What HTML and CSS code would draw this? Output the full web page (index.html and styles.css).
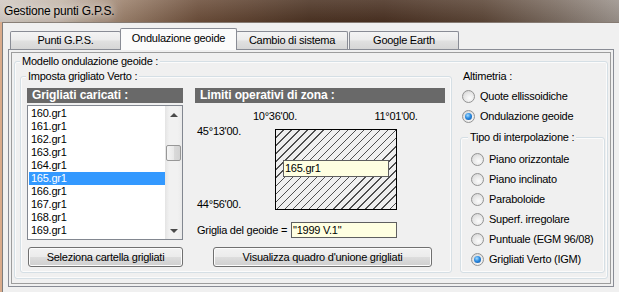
FILE: index.html
```html
<!DOCTYPE html>
<html>
  <head>
    <title>Gestione punti G.P.S.</title>
    <link rel="stylesheet" href="styles.css">
  </head>
  <body>
    <div class="titlebar">Gestione punti G.P.S.</div>
    <div class="client">
      <div class="client-body">
        <!-- tab strip -->
        <div class="tabs">
          <div class="tab tab-punti">Punti G.P.S.</div>
          <div class="tab tab-active">Ondulazione geoide</div>
          <div class="tab tab-cambio">Cambio di sistema</div>
          <div class="tab tab-google">Google Earth</div>
        </div>
        <div class="panel">
          <div class="panel-inner">
            <fieldset class="group group-modello">
              <legend>Modello ondulazione geoide :</legend>
              <div class="modello-body">
                <fieldset class="group group-imposta">
                  <legend>Imposta grigliato Verto :</legend>
                  <div class="imposta-body">
                    <div class="col-list">
                      <div class="band">Grigliati caricati :</div>
                      <div class="listbox">
                        <ul class="items">
                          <li>160.gr1</li>
                          <li>161.gr1</li>
                          <li>162.gr1</li>
                          <li>163.gr1</li>
                          <li>164.gr1</li>
                          <li class="sel">165.gr1</li>
                          <li>166.gr1</li>
                          <li>167.gr1</li>
                          <li>168.gr1</li>
                          <li>169.gr1</li>
                        </ul>
                        <div class="scrollbar">
                          <div class="sb-btn"><span class="arrow-up"></span></div>
                          <div class="sb-track"><span class="thumb"></span></div>
                          <div class="sb-btn"><span class="arrow-down"></span></div>
                        </div>
                      </div>
                      <button class="btn btn-cartella">Seleziona cartella grigliati</button>
                    </div>
                    <div class="col-zone">
                      <div class="band">Limiti operativi di zona :</div>
                      <div class="lon-row">
                        <span>10°36'00.</span>
                        <span class="lon-east">11°01'00.</span>
                      </div>
                      <div class="zone-row">
                        <div class="lat-col">
                          <span>45°13'00.</span>
                          <span>44°56'00.</span>
                        </div>
                        <div class="zone-map">
                          <div class="zone-label">165.gr1</div>
                        </div>
                      </div>
                      <div class="geoide-row">
                        <span class="geoide-text">Griglia del geoide =</span>
                        <div class="geoide-box">"1999 V.1"</div>
                      </div>
                      <button class="btn btn-quadro">Visualizza quadro d'unione grigliati</button>
                    </div>
                  </div>
                </fieldset>
                <div class="col-alti">
                  <div class="alti-title">Altimetria :</div>
                  <div class="radio-row first"><span class="radio"></span>Quote ellissoidiche</div>
                  <div class="radio-row"><span class="radio radio-on"></span>Ondulazione geoide</div>
                  <fieldset class="group group-tipo">
                    <legend>Tipo di interpolazione :</legend>
                    <div class="tipo-body">
                      <div class="radio-row"><span class="radio"></span>Piano orizzontale</div>
                      <div class="radio-row"><span class="radio"></span>Piano inclinato</div>
                      <div class="radio-row"><span class="radio"></span>Paraboloide</div>
                      <div class="radio-row"><span class="radio"></span>Superf. irregolare</div>
                      <div class="radio-row"><span class="radio"></span>Puntuale (EGM 96/08)</div>
                      <div class="radio-row"><span class="radio radio-on"></span>Grigliati Verto (IGM)</div>
                    </div>
                  </fieldset>
                </div>
              </div>
            </fieldset>
          </div>
        </div>
      </div>
    </div>
  </body>
</html>
```

FILE: styles.css
```css
* {
  box-sizing: border-box;
}

body {
  margin: 0;
  width: 619px;
  height: 292px;
  overflow: hidden;
  background-color: #f0f0f0;
  font-family: "Liberation Sans", Arial, sans-serif;
  font-size: 11px;
  line-height: 13px;
  letter-spacing: -0.25px;
  color: #000;
}

/* window frame */
.titlebar {
  height: 22px;
  padding: 4px 0 0 4px;
  font-size: 12px;
  line-height: 15px;
  letter-spacing: -0.2px;
  background:
    linear-gradient(rgba(255, 255, 255, 0.12), rgba(0, 0, 0, 0.05)),
    linear-gradient(90deg, #d2cac3 0%, #c2b4a7 10%, #9a7f6a 20%, #6c4e3a 32%, #4c3323 50%, #4a3122 62%, #5c4637 78%, #7c6d62 90%, #9b928b 100%);
  text-shadow: 0 0 6px #e8e2dc, 0 0 10px #e8e2dc, 0 0 14px #d8d0c8;
}

.client {
  height: 270px;
  border-left: 2px solid #d9ab8b;
}

.client-body {
  height: 100%;
  border-left: 1px solid #7d7d7d;
  border-top: 1px solid #857a72;
  padding-top: 5px;
}

/* tabs */
.tabs {
  display: flex;
  align-items: flex-end;
  height: 21px;
  margin-left: 7px;
}

.tab {
  height: 18px;
  border: 1px solid #898c95;
  border-bottom: none;
  border-radius: 2px 2px 0 0;
  background: linear-gradient(#f4f4f4, #ececec 45%, #e0e0e0 55%, #d6d6d6);
  text-align: center;
  line-height: 17px;
}

.tab-punti {
  width: 111px;
}

.tab-active {
  position: relative;
  z-index: 1;
  width: 117px;
  height: 22px;
  margin-left: -1px;
  margin-bottom: -1px;
  background: #fbfbfb;
  line-height: 19px;
}

.tab-cambio {
  width: 112px;
  margin-left: -1px;
}

.tab-google {
  width: 110px;
  margin-left: 1px;
}

.panel {
  width: 606px;
  height: 238px;
  margin-left: 5px;
  border: 1px solid #898c95;
  padding: 2px;
}

.panel-inner {
  height: 100%;
  border: 1px solid #9d9d9d;
  padding: 2px 2px 0;
}

/* group boxes */
.group {
  margin: 0;
  padding: 0;
  min-width: 0;
  border: 1px solid #d5dfe5;
  border-radius: 3px;
  box-shadow: inset 0 0 0 1px #fbfbfb;
}

.group legend {
  margin-left: 5px;
  padding: 0 2px;
  line-height: 13px;
  background: #f0f0f0;
}

.modello-body {
  display: flex;
  gap: 8px;
  padding: 2px 2px 5px 5px;
}

.group-imposta {
  width: 432px;
}

.imposta-body {
  display: flex;
  gap: 12px;
  padding: 5px 6px 5px 6px;
}

.band {
  height: 15px;
  padding-left: 5px;
  background-color: #696969;
  color: #fff;
  font-weight: bold;
  font-size: 12px;
  line-height: 15px;
  letter-spacing: -0.1px;
}

/* list of grids */
.col-list {
  width: 156px;
  display: flex;
  flex-direction: column;
}

.listbox {
  display: flex;
  height: 135px;
  margin-top: 2px;
  border: 1px solid #828790;
  padding: 0 0 0 1px;
  background: #fff;
}

.items {
  flex: 1;
  margin: 1px 0 0;
  padding: 0;
  list-style: none;
}

.items li {
  height: 13px;
  padding-left: 2px;
  line-height: 13px;
}

.items .sel {
  background-color: #3399ff;
  color: #fff;
}

.scrollbar {
  width: 17px;
  display: flex;
  flex-direction: column;
  background: linear-gradient(90deg, #e4e4e4, #f1f1f1 25%, #f1f1f1 75%, #eaeaea);
}

.sb-btn {
  height: 17px;
  display: flex;
  align-items: center;
  justify-content: center;
}

.sb-track {
  flex: 1;
  padding-top: 22px;
}

.thumb {
  display: block;
  width: 15px;
  height: 16px;
  margin-left: 1px;
  border: 1px solid #979797;
  border-radius: 2px;
  background: linear-gradient(90deg, #f5f5f5, #e9e9e9 50%, #dadada 51%, #d2d2d2);
}

.arrow-up {
  width: 0;
  height: 0;
  border-left: 4px solid transparent;
  border-right: 4px solid transparent;
  border-bottom: 4px solid #4a4a4a;
}

.arrow-down {
  width: 0;
  height: 0;
  border-left: 4px solid transparent;
  border-right: 4px solid transparent;
  border-top: 4px solid #4a4a4a;
}

/* buttons */
.btn {
  display: block;
  height: 20px;
  padding: 0;
  border: 1px solid #707070;
  border-radius: 3px;
  background: linear-gradient(#f2f2f2, #ebebeb 50%, #dddddd 51%, #cfcfcf);
  box-shadow: inset 0 0 0 1px #fcfcfc;
  font: inherit;
  letter-spacing: inherit;
  color: #000;
}

.btn-cartella {
  width: 155px;
  margin: 7px 0 0 1px;
}

.btn-quadro {
  width: 219px;
  margin: 9px 0 0 18px;
}

/* zone limits */
.col-zone {
  width: 250px;
}

.lon-row {
  display: flex;
  margin-top: 7px;
  padding-left: 50px;
}

.lon-row span {
  width: 60px;
  text-align: center;
}

.lon-row .lon-east {
  margin-left: 61px;
}

.zone-row {
  display: flex;
  height: 86px;
  margin-top: 2px;
}

.lat-col {
  width: 80px;
  padding-left: 2px;
  display: flex;
  flex-direction: column;
  justify-content: space-between;
}

.zone-map {
  width: 122px;
  height: 81px;
  margin-top: 4px;
  border: 1px solid #000;
  padding: 30px 0 0 7px;
  background: repeating-linear-gradient(135deg, transparent 0 4.7px, #505050 4.7px 5.7px);
}

.zone-label {
  width: 106px;
  height: 17px;
  padding-left: 1px;
  border: 1px solid #5f5f5f;
  background-color: #ffffe1;
  line-height: 15px;
}

.geoide-row {
  display: flex;
  align-items: center;
  margin-top: 11px;
  padding-left: 2px;
}

.geoide-text {
  width: 94px;
}

.geoide-box {
  width: 106px;
  height: 16px;
  padding-left: 1px;
  border: 1px solid #5f5f5f;
  background-color: #ffffe1;
  line-height: 14px;
}

/* altimetry column */
.col-alti {
  flex: 1;
  display: flex;
  flex-direction: column;
}

.alti-title {
  padding-left: 3px;
}

.radio-row {
  display: flex;
  align-items: center;
  gap: 5px;
  height: 20px;
  padding-left: 2px;
}

.radio-row.first {
  margin-top: 3px;
}

.radio {
  width: 13px;
  height: 13px;
  display: flex;
  align-items: center;
  justify-content: center;
  border: 1px solid #939393;
  border-radius: 50%;
  background: radial-gradient(circle at 60% 65%, #fcfcfc 0%, #e6e6e6 55%, #cbcbcb 100%);
}

.radio-on::after {
  content: "";
  width: 7px;
  height: 7px;
  border-radius: 50%;
  background: radial-gradient(circle at 40% 35%, #a6ddff 0%, #2b8ae0 45%, #0c4f9e 100%);
}

.group-tipo {
  flex: 1;
  margin-top: 5px;
}

.group-tipo legend {
  margin-left: 7px;
}

.tipo-body {
  padding: 5px 0 3px 8px;
}
```
